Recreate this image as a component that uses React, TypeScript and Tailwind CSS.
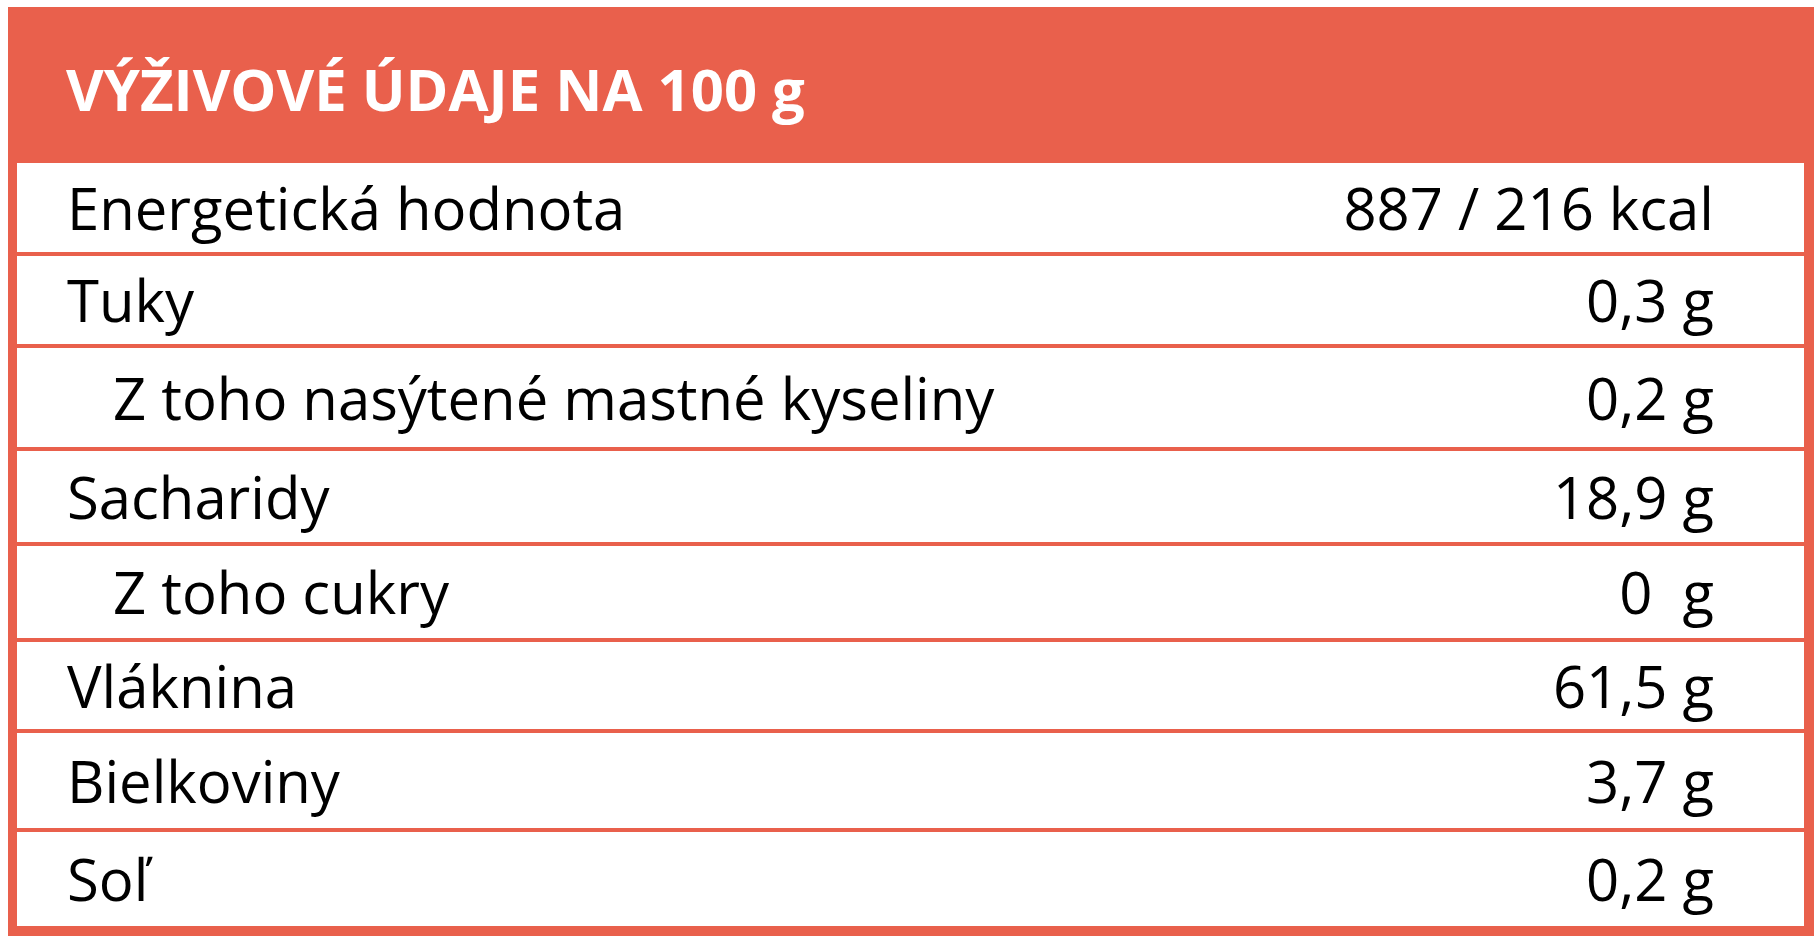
const rows: { label: string; value: string; sub?: boolean; h: string }[] = [
  { label: 'Energetická hodnota', value: '887 / 216 kcal', h: 'h-[89px]' },
  { label: 'Tuky', value: '0,3 g', h: 'h-[88px]' },
  { label: 'Z toho nasýtené mastné kyseliny', value: '0,2 g', sub: true, h: 'h-[99px]' },
  { label: 'Sacharidy', value: '18,9 g', h: 'h-[91px]' },
  { label: 'Z toho cukry', value: '0\u00a0\u00a0g', sub: true, h: 'h-[92px]' },
  { label: 'Vláknina', value: '61,5 g', h: 'h-[87px]' },
  { label: 'Bielkoviny', value: '3,7 g', h: 'h-[95px]' },
  { label: 'Soľ', value: '0,2 g', h: 'h-[94px]' },
];

export default function App() {
  return (
    <div className="w-[1819px] h-[942px] bg-white pt-[7px] pl-[8px] font-['Open_Sans',sans-serif]">
      <div className="w-[1806px] bg-[#e9604c] pl-[9px] pr-[10px] pb-[10px] flex flex-col">
        {/* Header */}
        <div className="h-[156px] flex items-center pl-[49px] pt-[8px]">
          <h1 className="text-white font-bold text-[58px] leading-none">
            VÝŽIVOVÉ ÚDAJE NA 100 g
          </h1>
        </div>

        {/* Rows */}
        <div className="flex flex-col gap-[4px]">
          {rows.map(r => (
            <div
              key={r.label}
              className={`${r.h} bg-white flex items-center justify-between pr-[90px] text-black text-[58px] leading-none ${r.sub ? 'pl-[96px]' : 'pl-[50px]'}`}
            >
              <span>{r.label}</span>
              <span className="whitespace-pre">{r.value}</span>
            </div>
          ))}
        </div>
      </div>
    </div>
  );
}
